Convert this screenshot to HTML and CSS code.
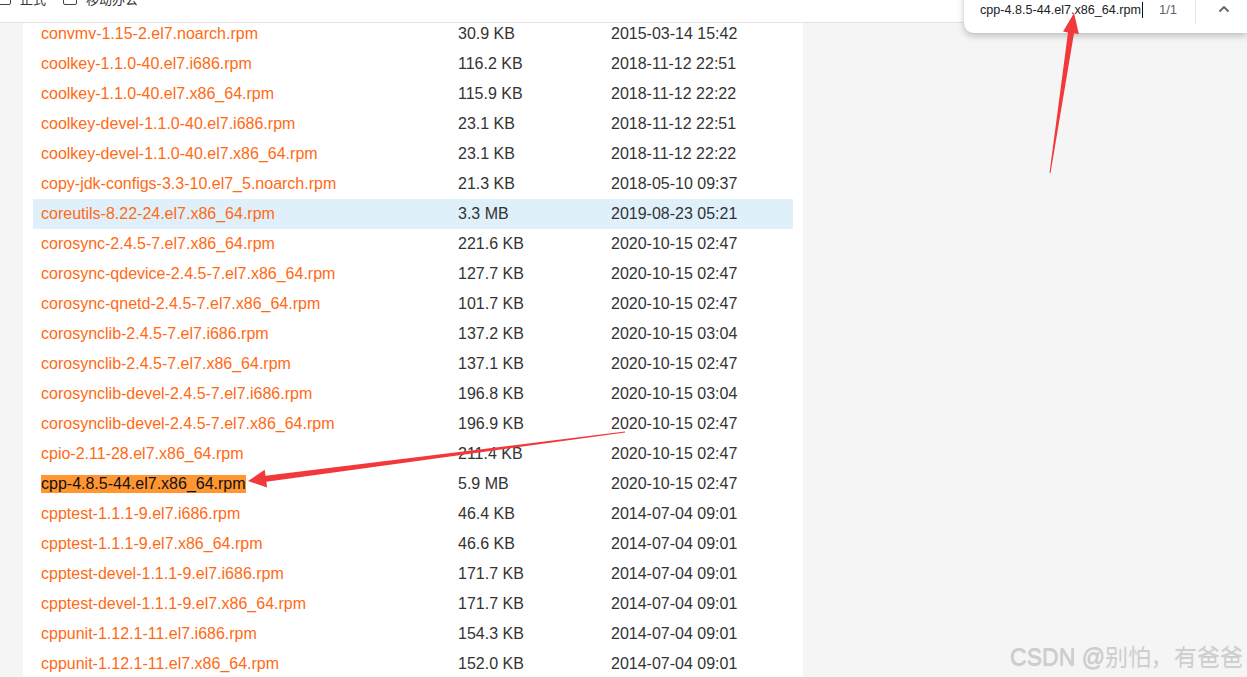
FILE: index.html
```html
<!DOCTYPE html>
<html lang="zh">
<head>
<meta charset="utf-8">
<title>rpm list</title>
<link rel="stylesheet" href="styles.css">
</head>
<body>
<header class="topbar">
  <div class="topbar-inner">
    <label class="opt opt-first"><span class="box"></span><span class="opt-text">正式</span></label>
    <label class="opt"><span class="box"></span><span class="opt-text">移动办公</span></label>
  </div>
</header>
<main class="main">
  <section class="panel">
    <div class="list">
      <div class="row"><a class="name">convmv-1.15-2.el7.noarch.rpm</a><span class="size">30.9 KB</span><span class="date">2015-03-14 15:42</span></div>
      <div class="row"><a class="name">coolkey-1.1.0-40.el7.i686.rpm</a><span class="size">116.2 KB</span><span class="date">2018-11-12 22:51</span></div>
      <div class="row"><a class="name">coolkey-1.1.0-40.el7.x86_64.rpm</a><span class="size">115.9 KB</span><span class="date">2018-11-12 22:22</span></div>
      <div class="row"><a class="name">coolkey-devel-1.1.0-40.el7.i686.rpm</a><span class="size">23.1 KB</span><span class="date">2018-11-12 22:51</span></div>
      <div class="row"><a class="name">coolkey-devel-1.1.0-40.el7.x86_64.rpm</a><span class="size">23.1 KB</span><span class="date">2018-11-12 22:22</span></div>
      <div class="row"><a class="name">copy-jdk-configs-3.3-10.el7_5.noarch.rpm</a><span class="size">21.3 KB</span><span class="date">2018-05-10 09:37</span></div>
      <div class="row row-hover"><a class="name">coreutils-8.22-24.el7.x86_64.rpm</a><span class="size">3.3 MB</span><span class="date">2019-08-23 05:21</span></div>
      <div class="row"><a class="name">corosync-2.4.5-7.el7.x86_64.rpm</a><span class="size">221.6 KB</span><span class="date">2020-10-15 02:47</span></div>
      <div class="row"><a class="name">corosync-qdevice-2.4.5-7.el7.x86_64.rpm</a><span class="size">127.7 KB</span><span class="date">2020-10-15 02:47</span></div>
      <div class="row"><a class="name">corosync-qnetd-2.4.5-7.el7.x86_64.rpm</a><span class="size">101.7 KB</span><span class="date">2020-10-15 02:47</span></div>
      <div class="row"><a class="name">corosynclib-2.4.5-7.el7.i686.rpm</a><span class="size">137.2 KB</span><span class="date">2020-10-15 03:04</span></div>
      <div class="row"><a class="name">corosynclib-2.4.5-7.el7.x86_64.rpm</a><span class="size">137.1 KB</span><span class="date">2020-10-15 02:47</span></div>
      <div class="row"><a class="name">corosynclib-devel-2.4.5-7.el7.i686.rpm</a><span class="size">196.8 KB</span><span class="date">2020-10-15 03:04</span></div>
      <div class="row"><a class="name">corosynclib-devel-2.4.5-7.el7.x86_64.rpm</a><span class="size">196.9 KB</span><span class="date">2020-10-15 02:47</span></div>
      <div class="row"><a class="name">cpio-2.11-28.el7.x86_64.rpm</a><span class="size">211.4 KB</span><span class="date">2020-10-15 02:47</span></div>
      <div class="row"><a class="name"><mark class="found">cpp-4.8.5-44.el7.x86_64.rpm</mark></a><span class="size">5.9 MB</span><span class="date">2020-10-15 02:47</span></div>
      <div class="row"><a class="name">cpptest-1.1.1-9.el7.i686.rpm</a><span class="size">46.4 KB</span><span class="date">2014-07-04 09:01</span></div>
      <div class="row"><a class="name">cpptest-1.1.1-9.el7.x86_64.rpm</a><span class="size">46.6 KB</span><span class="date">2014-07-04 09:01</span></div>
      <div class="row"><a class="name">cpptest-devel-1.1.1-9.el7.i686.rpm</a><span class="size">171.7 KB</span><span class="date">2014-07-04 09:01</span></div>
      <div class="row"><a class="name">cpptest-devel-1.1.1-9.el7.x86_64.rpm</a><span class="size">171.7 KB</span><span class="date">2014-07-04 09:01</span></div>
      <div class="row"><a class="name">cppunit-1.12.1-11.el7.i686.rpm</a><span class="size">154.3 KB</span><span class="date">2014-07-04 09:01</span></div>
      <div class="row"><a class="name">cppunit-1.12.1-11.el7.x86_64.rpm</a><span class="size">152.0 KB</span><span class="date">2014-07-04 09:01</span></div>
    </div>
  </section>
</main>

<div class="findbar">
  <span class="find-query">cpp-4.8.5-44.el7.x86_64.rpm</span><span class="caret"></span>
  <span class="find-count">1/1</span>
  <span class="find-sep"></span>
  <svg class="find-up" width="12" height="8" viewBox="0 0 12 8"><path d="M1.5 6.5 L6 2 L10.5 6.5" fill="none" stroke="#5f6368" stroke-width="1.8"/></svg>
</div>

<svg class="arrows" width="1247" height="677" viewBox="0 0 1247 677">
  <polygon fill="#f2383a" points="1050.5,173.1 1074.0,33.2 1078.9,34.0 1074,13 1063.1,31.6 1068.0,32.4 1049.5,172.9"/>
  <polygon fill="#f2383a" points="625.1,432.6 266.3,481.7 267.1,487.6 248,481 264.7,469.8 265.5,475.7 624.9,431.6"/>
</svg>

<div class="watermark">CSDN @别怕，有爸爸</div>
</body>
</html>
```

FILE: styles.css
```css
* { box-sizing: border-box; }
html, body { margin: 0; padding: 0; }
html { background: #f5f5f5; }
body {
  width: 1247px;
  height: 677px;
  overflow: hidden;
  background: #f5f5f5;
  font-family: "Liberation Sans", Arial, "Noto Sans CJK SC", sans-serif;
  position: relative;
  display: flex;
  flex-direction: column;
}
.topbar {
  flex: 0 0 23px;
  height: 23px;
  background: #fff;
  border-bottom: 1px solid #e2e2e2;
  overflow: hidden;
}
.topbar-inner {
  display: flex;
  align-items: center;
  margin-top: -9px;
  height: 14px;
}
.opt {
  display: flex;
  align-items: center;
  gap: 9px;
  margin-right: 17px;
  font-size: 13px;
  color: #333;
  font-family: "Noto Sans CJK SC", sans-serif;
}
.opt-first { margin-left: -3px; }
.box {
  width: 14px;
  height: 14px;
  border: 1px solid #444;
  border-radius: 2px;
  background: #fff;
}
.main {
  flex: 1 1 auto;
  display: flex;
  min-height: 0;
  overflow: hidden;
}
.panel {
  flex: 0 0 780px;
  width: 780px;
  margin-left: 23px;
  background: #fff;
  padding: 0 10px;
  overflow: hidden;
}
.list { margin-top: -4px; }
.row {
  display: grid;
  grid-template-columns: 425px 153px 1fr;
  height: 30px;
  line-height: 30px;
  font-size: 16px;
  color: #333;
}
.row-hover { background: #dff0fb; }
.name {
  padding-left: 8px;
  color: #ff6a13;
  white-space: nowrap;
}
.found {
  background: #ff9632;
  color: #111;
  line-height: 18px;
  display: inline-block;
}
.findbar {
  position: absolute;
  top: -15px;
  right: 0;
  width: 283px;
  height: 48px;
  background: #fff;
  border-radius: 0 0 0 9px;
  box-shadow: 0 3px 7px rgba(0,0,0,0.22), 0 0 1px rgba(0,0,0,0.2);
  display: flex;
  align-items: center;
  padding: 0 0 0 16px;
  font-size: 12.6px;
  color: #202124;
}
.findbar .find-query { margin-top: 1px; }
.caret {
  width: 1px;
  height: 16px;
  background: #111;
  margin-left: 1px;
  margin-top: 1px;
}
.find-count {
  margin-left: 16px;
  color: #5f6368;
  font-size: 13px;
  width: 36px;
}
.find-sep {
  width: 1px;
  height: 38px;
  background: #e3e3e3;
  margin-top: -8px;
}
.find-up { margin-left: 22px; margin-top: 0; }
.arrows {
  position: absolute;
  top: 0;
  left: 0;
  pointer-events: none;
}
.watermark {
  position: absolute;
  right: 4px;
  bottom: 5px;
  font-size: 23px;
  color: #cdcdcd;
  text-shadow: 0 1px 1px rgba(0,0,0,0.18);
  font-family: "Liberation Sans", "Noto Sans CJK SC", sans-serif;
  font-weight: 300;
  white-space: nowrap;
}
```
